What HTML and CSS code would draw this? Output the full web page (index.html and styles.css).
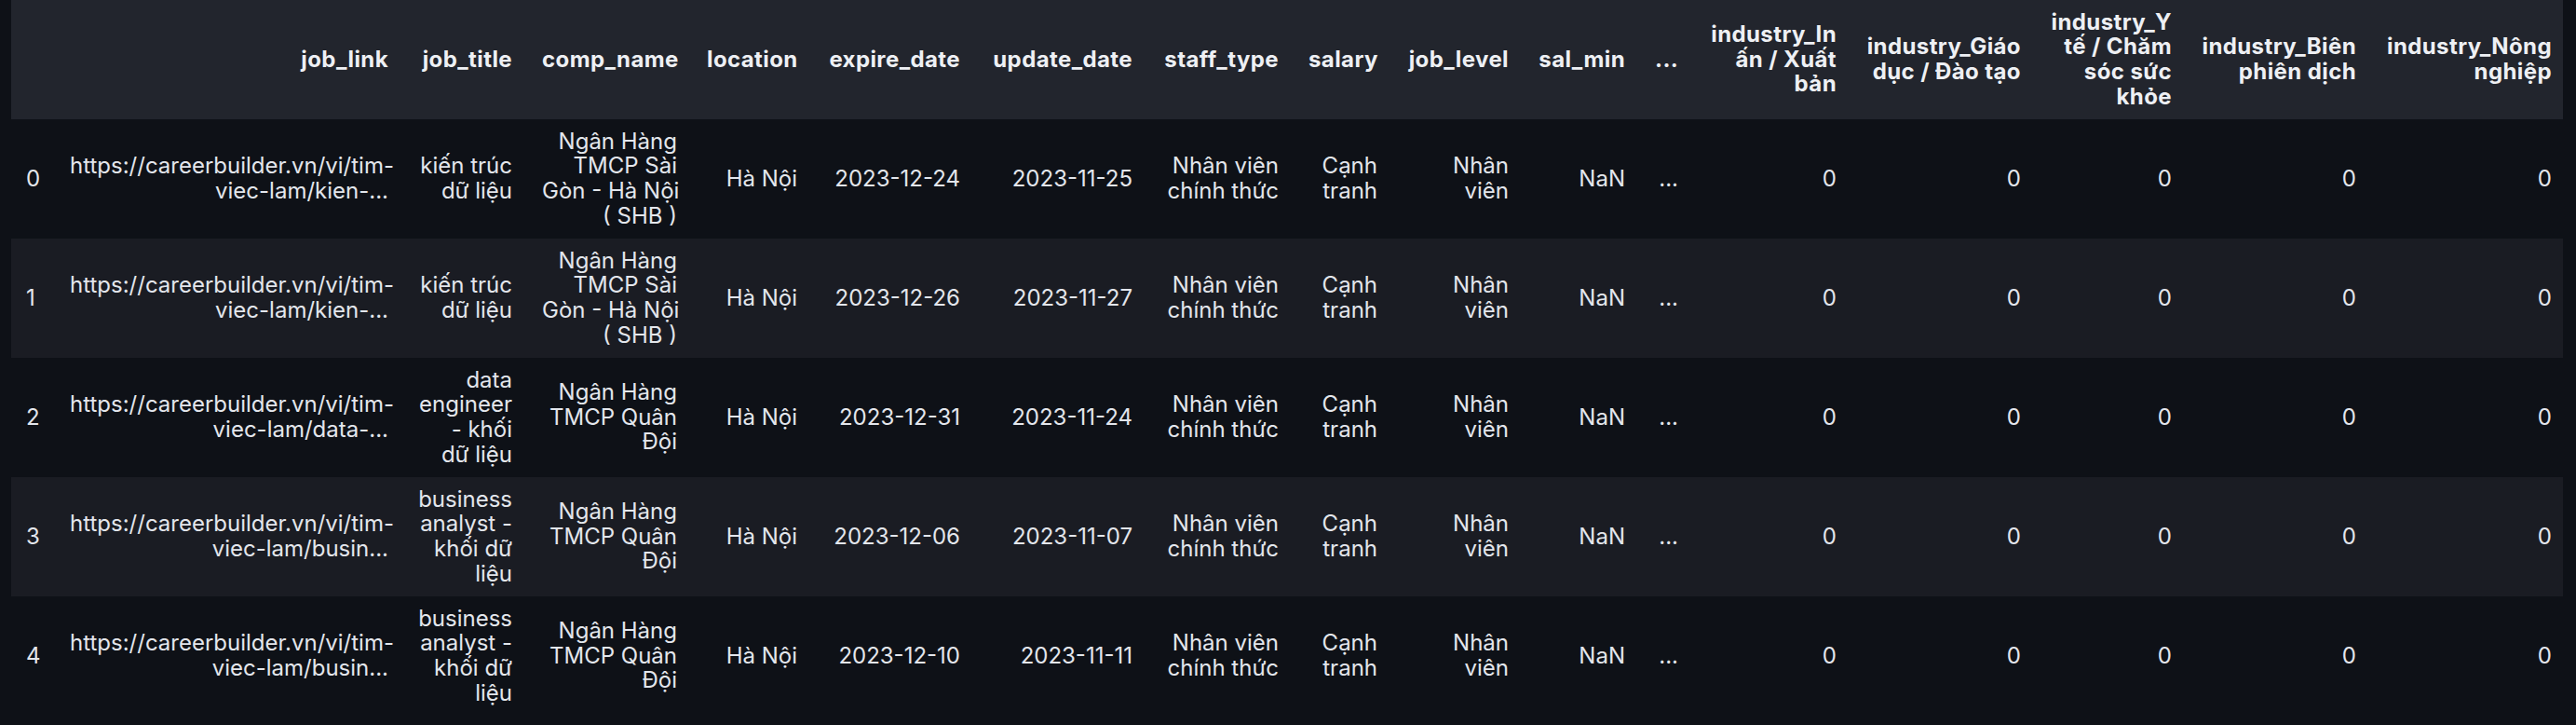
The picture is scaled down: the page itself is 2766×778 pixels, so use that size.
FILE: index.html
```html
<!DOCTYPE html>
<html lang="vi">
<head>
<meta charset="utf-8">
<title>DataFrame</title>
<link rel="stylesheet" href="styles.css">
</head>
<body>
<div class="df">
  <div class="row head">
    <div class="c idx"></div>
    <div class="c">job_link</div>
    <div class="c">job_title</div>
    <div class="c">comp_name</div>
    <div class="c">location</div>
    <div class="c">expire_date</div>
    <div class="c">update_date</div>
    <div class="c">staff_type</div>
    <div class="c">salary</div>
    <div class="c">job_level</div>
    <div class="c">sal_min</div>
    <div class="c">...</div>
    <div class="c">industry_In<br>ấn / Xuất<br>bản</div>
    <div class="c">industry_Giáo<br>dục / Đào tạo</div>
    <div class="c">industry_Y<br>tế / Chăm<br>sóc sức<br>khỏe</div>
    <div class="c">industry_Biên<br>phiên dịch</div>
    <div class="c last">industry_Nông<br>nghiệp</div>
  </div>

  <div class="row">
    <div class="c idx">0</div>
    <div class="c">https://careerbuilder.vn/vi/tim-<br>viec-lam/kien-...</div>
    <div class="c">kiến trúc<br>dữ liệu</div>
    <div class="c">Ngân Hàng<br>TMCP Sài<br>Gòn - Hà Nội<br>( SHB )</div>
    <div class="c">Hà Nội</div>
    <div class="c">2023-12-24</div>
    <div class="c">2023-11-25</div>
    <div class="c">Nhân viên<br>chính thức</div>
    <div class="c">Cạnh<br>tranh</div>
    <div class="c">Nhân<br>viên</div>
    <div class="c">NaN</div>
    <div class="c">...</div>
    <div class="c">0</div>
    <div class="c">0</div>
    <div class="c">0</div>
    <div class="c">0</div>
    <div class="c last">0</div>
  </div>

  <div class="row alt">
    <div class="c idx">1</div>
    <div class="c">https://careerbuilder.vn/vi/tim-<br>viec-lam/kien-...</div>
    <div class="c">kiến trúc<br>dữ liệu</div>
    <div class="c">Ngân Hàng<br>TMCP Sài<br>Gòn - Hà Nội<br>( SHB )</div>
    <div class="c">Hà Nội</div>
    <div class="c">2023-12-26</div>
    <div class="c">2023-11-27</div>
    <div class="c">Nhân viên<br>chính thức</div>
    <div class="c">Cạnh<br>tranh</div>
    <div class="c">Nhân<br>viên</div>
    <div class="c">NaN</div>
    <div class="c">...</div>
    <div class="c">0</div>
    <div class="c">0</div>
    <div class="c">0</div>
    <div class="c">0</div>
    <div class="c last">0</div>
  </div>

  <div class="row">
    <div class="c idx">2</div>
    <div class="c">https://careerbuilder.vn/vi/tim-<br>viec-lam/data-...</div>
    <div class="c">data<br>engineer<br>- khối<br>dữ liệu</div>
    <div class="c">Ngân Hàng<br>TMCP Quân<br>Đội</div>
    <div class="c">Hà Nội</div>
    <div class="c">2023-12-31</div>
    <div class="c">2023-11-24</div>
    <div class="c">Nhân viên<br>chính thức</div>
    <div class="c">Cạnh<br>tranh</div>
    <div class="c">Nhân<br>viên</div>
    <div class="c">NaN</div>
    <div class="c">...</div>
    <div class="c">0</div>
    <div class="c">0</div>
    <div class="c">0</div>
    <div class="c">0</div>
    <div class="c last">0</div>
  </div>

  <div class="row alt">
    <div class="c idx">3</div>
    <div class="c">https://careerbuilder.vn/vi/tim-<br>viec-lam/busin...</div>
    <div class="c">business<br>analyst -<br>khối dữ<br>liệu</div>
    <div class="c">Ngân Hàng<br>TMCP Quân<br>Đội</div>
    <div class="c">Hà Nội</div>
    <div class="c">2023-12-06</div>
    <div class="c">2023-11-07</div>
    <div class="c">Nhân viên<br>chính thức</div>
    <div class="c">Cạnh<br>tranh</div>
    <div class="c">Nhân<br>viên</div>
    <div class="c">NaN</div>
    <div class="c">...</div>
    <div class="c">0</div>
    <div class="c">0</div>
    <div class="c">0</div>
    <div class="c">0</div>
    <div class="c last">0</div>
  </div>

  <div class="row">
    <div class="c idx">4</div>
    <div class="c">https://careerbuilder.vn/vi/tim-<br>viec-lam/busin...</div>
    <div class="c">business<br>analyst -<br>khối dữ<br>liệu</div>
    <div class="c">Ngân Hàng<br>TMCP Quân<br>Đội</div>
    <div class="c">Hà Nội</div>
    <div class="c">2023-12-10</div>
    <div class="c">2023-11-11</div>
    <div class="c">Nhân viên<br>chính thức</div>
    <div class="c">Cạnh<br>tranh</div>
    <div class="c">Nhân<br>viên</div>
    <div class="c">NaN</div>
    <div class="c">...</div>
    <div class="c">0</div>
    <div class="c">0</div>
    <div class="c">0</div>
    <div class="c">0</div>
    <div class="c last">0</div>
  </div>
</div>
</body>
</html>
```
FILE: styles.css
```css
html, body {
  margin: 0;
  padding: 0;
  background: #0e1117;
}

body {
  padding: 0 14px 0 12px;
  font-family: Inter, "Noto Sans", sans-serif;
  font-size: 24px;
  line-height: 26.7px;
  color: #e3e6ec;
}

.df {
  --cols: 47px 374px 133px 177px 129px 175px 185px 157px 106px 141px 125px 57px 170px 198px 162px 198px 206px;
  display: flex;
  flex-direction: column;
  width: 2740px;
}

.row {
  display: grid;
  grid-template-columns: var(--cols);
  align-items: center;
  height: 128px;
  background: #0e1117;
}

.row.alt {
  background: #1a1c23;
}

.row.head {
  background: #22252d;
  font-weight: 700;
  letter-spacing: 0.4px;
  color: #eef0f4;
}

.c {
  padding: 0 16px;
  text-align: right;
  white-space: nowrap;
}

.c.idx {
  text-align: left;
}

.c.last {
  padding-right: 12px;
}
```
